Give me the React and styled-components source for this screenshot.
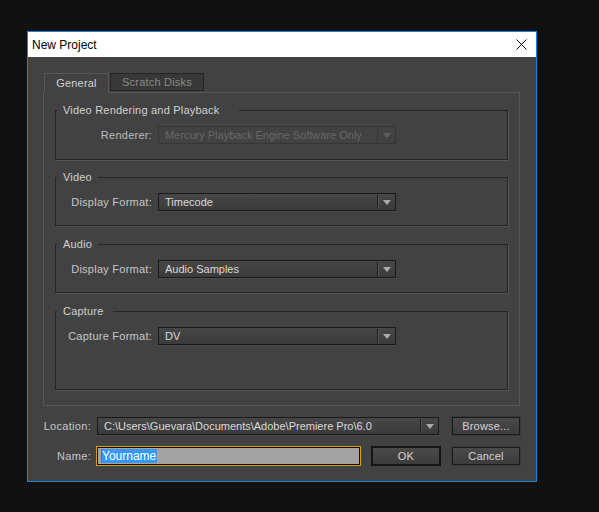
import React from "react";
import styled, { createGlobalStyle } from "styled-components";

const GlobalStyle = createGlobalStyle`
  html, body { margin: 0; padding: 0; background: #111111; }
  body { font-family: "Liberation Sans", Arial, sans-serif; }
  * { box-sizing: border-box; }
`;

const Desktop = styled.div`
  min-height: 512px;
  padding: 31px 0 0 27px;
  background: #111111;
`;

const Window = styled.div`
  width: 510px;
  height: 451px;
  border: 1px solid #1b84d6;
  background: #424242;
  display: flex;
  flex-direction: column;
`;

const TitleBar = styled.div`
  height: 25px;
  flex: none;
  background: #ffffff;
  display: flex;
  align-items: center;
  justify-content: space-between;
  padding: 0 9px 0 4px;
  font-size: 12px;
  color: #000;
`;

const CloseButton = styled.svg`
  display: block;
  width: 11px;
  height: 11px;
`;

const Body = styled.div`
  padding: 16px 16px 0 15px;
  display: flex;
  flex-direction: column;
`;

const TabBar = styled.div`
  display: flex;
  align-items: flex-start;
  gap: 1px;
  padding-left: 1px;
  height: 19px;
  position: relative;
  z-index: 1;
`;

const Tab = styled.div`
  height: ${(p) => (p.$active ? "20px" : "18px")};
  width: ${(p) => p.$w}px;
  display: flex;
  align-items: center;
  justify-content: center;
  padding-bottom: ${(p) => (p.$active ? "2px" : "0")};
  font-size: 11px;
  letter-spacing: 0.2px;
  color: ${(p) => (p.$active ? "#d2d2d2" : "#8a8a8a")};
  background: ${(p) => (p.$active ? "#424242" : "#383838")};
  border: 1px solid ${(p) => (p.$active ? "#575757" : "#262626")};
  border-bottom: ${(p) => (p.$active ? "none" : "1px solid #262626")};
`;

const Panel = styled.div`
  height: 314px;
  border: 1px solid #575757;
  padding: 10px 11px 0 11px;
  display: flex;
  flex-direction: column;
  gap: 10px;
`;

const Group = styled.fieldset`
  margin: 0;
  min-width: 0;
  height: ${(p) => p.$h}px;
  margin-top: ${(p) => p.$mt || 0}px;
  border: 1px solid #262626;
  box-shadow: 1px 1px 0 #555555;
  padding: 9px 0 0 0;
`;

const Legend = styled.legend`
  font-size: 11px;
  line-height: 14px;
  letter-spacing: 0.2px;
  color: #d0d0d0;
  padding: 0 ${(p) => p.$pr || 6}px 0 6px;
  margin-left: 1px;
`;

const FieldRow = styled.div`
  display: grid;
  grid-template-columns: 96px 238px;
  column-gap: 6px;
  align-items: center;
`;

const FieldLabel = styled.div`
  text-align: right;
  font-size: 11px;
  letter-spacing: 0.25px;
  color: ${(p) => (p.$dim ? "#bdbdbd" : "#c6c6c6")};
`;

const DropBox = styled.div`
  height: 18px;
  width: ${(p) => (p.$w ? `${p.$w}px` : "auto")};
  display: flex;
  align-items: stretch;
  border: 1px solid ${(p) => (p.$disabled ? "#363636" : "#1a1a1a")};
  background: ${(p) =>
    p.$disabled
      ? "#424242"
      : "linear-gradient(#474747, #3b3b3b)"};
  box-shadow: ${(p) => (p.$disabled ? "none" : "0 1px 0 #4c4c4c")};
`;

const DropValue = styled.div`
  flex: 1;
  padding-left: 6px;
  font-size: 11px;
  line-height: 16px;
  white-space: nowrap;
  overflow: hidden;
  color: ${(p) => (p.$disabled ? "#686868" : "#dadada")};
`;

const DropArrow = styled.div`
  width: 18px;
  flex: none;
  display: flex;
  align-items: center;
  justify-content: center;
  margin: 1px 0;
  border-left: 1px solid ${(p) => (p.$disabled ? "#363636" : "#1e1e1e")};
  box-shadow: inset 1px 0 0 ${(p) => (p.$disabled ? "transparent" : "#545454")};
`;

const ArrowIcon = ({ color }) => (
  <svg width="8" height="5" viewBox="0 0 8 5" style={{ display: "block" }}>
    <polygon points="0,0 8,0 4,5" fill={color} />
  </svg>
);

const Dropdown = ({ value, disabled, w }) => (
  <DropBox $disabled={disabled} $w={w}>
    <DropValue $disabled={disabled}>{value}</DropValue>
    <DropArrow $disabled={disabled}>
      <ArrowIcon color={disabled ? "#5e5e5e" : "#ababab"} />
    </DropArrow>
  </DropBox>
);

const BottomRow = styled.div`
  display: flex;
  align-items: center;
  margin-top: 11px;
`;

const BottomLabel = styled.div`
  width: 48px;
  text-align: right;
  font-size: 11px;
  letter-spacing: 0.3px;
  color: #c6c6c6;
  margin-right: ${(p) => p.$mr}px;
`;

const Button = styled.div`
  width: ${(p) => p.$w}px;
  height: ${(p) => (p.$default ? 20 : 18)}px;
  margin-left: ${(p) => p.$ml}px;
  display: flex;
  align-items: center;
  justify-content: center;
  font-size: 11px;
  letter-spacing: 0.2px;
  color: #d4d4d4;
  border: ${(p) => (p.$default ? "2px solid #151515" : "1px solid #1a1a1a")};
  background: linear-gradient(#4a4a4a, #3c3c3c);
  box-shadow: ${(p) => (p.$default ? "none" : "0 0 0 1px #3a3a3a")};
`;

const NameInput = styled.div`
  width: 265px;
  height: 20px;
  border: 1px solid #e39e00;
  box-shadow: inset 0 0 0 1px #0b0b0b;
  background: #a3a3a3;
  display: flex;
  align-items: center;
  padding-left: 4px;
  font-size: 12px;
`;

const Caret = styled.span`
  width: 1px;
  height: 14px;
  background: #b45a00;
  margin-right: -1px;
  position: relative;
  z-index: 1;
`;

const Selected = styled.span`
  background: #3399ff;
  color: #ffffff;
  line-height: 14px;
  padding: 0 1px 0 1px;
`;

export default function App() {
  return (
    <>
      <GlobalStyle />
      <Desktop>
        <Window>
          <TitleBar>
            <span>New Project</span>
            <CloseButton viewBox="0 0 11 11">
              <path d="M0.5 0.5 L10.5 10.5 M10.5 0.5 L0.5 10.5" stroke="#000" strokeWidth="1" fill="none" />
            </CloseButton>
          </TitleBar>
          <Body>
            <TabBar>
              <Tab $active $w={65}>General</Tab>
              <Tab $w={94}>Scratch Disks</Tab>
            </TabBar>
            <Panel>
              <Group $h={57}>
                <Legend $pr={20}>Video Rendering and Playback</Legend>
                <FieldRow>
                  <FieldLabel $dim>Renderer:</FieldLabel>
                  <Dropdown value="Mercury Playback Engine Software Only" disabled />
                </FieldRow>
              </Group>
              <Group $h={56}>
                <Legend>Video</Legend>
                <FieldRow>
                  <FieldLabel>Display Format:</FieldLabel>
                  <Dropdown value="Timecode" />
                </FieldRow>
              </Group>
              <Group $h={56} $mt={1}>
                <Legend>Audio</Legend>
                <FieldRow>
                  <FieldLabel>Display Format:</FieldLabel>
                  <Dropdown value="Audio Samples" />
                </FieldRow>
              </Group>
              <Group $h={86} $mt={1}>
                <Legend $pr={9}>Capture</Legend>
                <FieldRow>
                  <FieldLabel>Capture Format:</FieldLabel>
                  <Dropdown value="DV" />
                </FieldRow>
              </Group>
            </Panel>
            <BottomRow>
              <BottomLabel $mr={6}>Location:</BottomLabel>
              <Dropdown w={342} value="C:\Users\Guevara\Documents\Adobe\Premiere Pro\6.0" />
              <Button $w={68} $ml={13}>Browse...</Button>
            </BottomRow>
            <BottomRow>
              <BottomLabel $mr={5}>Name:</BottomLabel>
              <NameInput>
                <Caret />
                <Selected>Yourname</Selected>
              </NameInput>
              <Button $w={70} $ml={10} $default>OK</Button>
              <Button $w={68} $ml={11}>Cancel</Button>
            </BottomRow>
          </Body>
        </Window>
      </Desktop>
    </>
  );
}
